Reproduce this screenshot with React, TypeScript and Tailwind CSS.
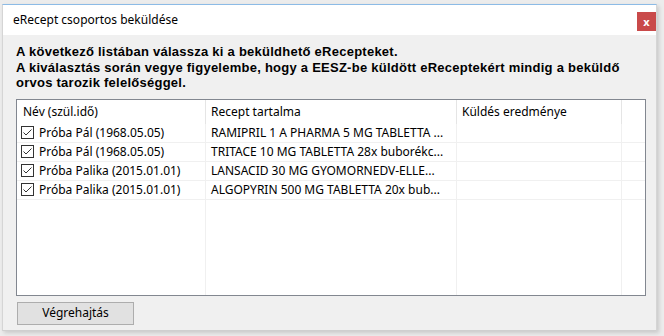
import React from "react";

const rows = [
  { name: "Próba Pál (1968.05.05)", recept: "RAMIPRIL 1 A PHARMA 5 MG TABLETTA ..." },
  { name: "Próba Pál (1968.05.05)", recept: "TRITACE 10 MG TABLETTA 28x buborékc..." },
  { name: "Próba Palika (2015.01.01)", recept: "LANSACID 30 MG GYOMORNEDV-ELLE..." },
  { name: "Próba Palika (2015.01.01)", recept: "ALGOPYRIN 500 MG TABLETTA 20x bub..." },
];

function CheckBox() {
  return (
    <span className="w-[13px] h-[13px] border border-[#333] bg-white flex items-center justify-center shrink-0">
      <svg width="11" height="11" viewBox="0 0 11 11">
        <path d="M1.5 5.5 L4 8 L9.5 2.5" fill="none" stroke="#333" strokeWidth="1" />
      </svg>
    </span>
  );
}

export default function App() {
  return (
    <div className="w-[664px] h-[336px] bg-[#ececec] overflow-hidden pt-[4px] pl-[2px]">
      {/* dialog window */}
      <div
        className="w-[655px] h-[327px] bg-[#f0f0f0] border-t border-[#8cbbe6] border-x border-b border-x-[#d5d5d5] border-b-[#cfcfcf] shadow-[2px_2px_4px_rgba(0,0,0,0.15)] flex flex-col"
        style={{ fontFamily: '"Noto Sans", sans-serif' }}
      >
        {/* title bar */}
        <div className="h-[30px] bg-white flex items-center justify-between pl-[10px]">
          <span className="text-[12px] text-black leading-none">eRecept csoportos beküldése</span>
          <div className="w-[19px] h-[19px] bg-[#c94a4a] flex items-center justify-center text-white text-[11px] font-bold leading-none mt-[2px]">
            x
          </div>
        </div>

        {/* message */}
        <div
          className="pl-[13px] pt-[9px] text-[13px] font-bold leading-[15.5px] tracking-[0.25px] text-black"
          style={{ fontFamily: '"Liberation Sans", Arial, sans-serif' }}
        >
          <p>A következő listában válassza ki a beküldhető eRecepteket.</p>
          <p>A kiválasztás során vegye figyelembe, hogy a EESZ-be küldött eReceptekért mindig a beküldő</p>
          <p>orvos tarozik felelőséggel.</p>
        </div>

        {/* list view */}
        <div className="ml-[13px] mt-[8px] w-[630px] h-[197px] bg-white border border-[#828790] overflow-hidden text-[12px] text-black">
          <div className="flex h-[24px] items-center">
            <div className="w-[189px] h-full pl-[6px] flex items-center border-r border-[#e5e5e5]">Név (szül.idő)</div>
            <div className="w-[251px] h-full pl-[5px] flex items-center border-r border-[#e5e5e5]">Recept tartalma</div>
            <div className="w-[165px] h-full pl-[5px] flex items-center border-r border-[#e5e5e5]">Küldés eredménye</div>
            <div className="flex-1 h-full" />
          </div>
          {rows.map((r, i) => (
            <div key={i} className="flex h-[19px] border-b border-[#f0f0f0]">
              <div className="w-[189px] h-full pl-[4px] flex items-center gap-[5px] border-r border-[#f0f0f0] whitespace-nowrap">
                <CheckBox />
                <span>{r.name}</span>
              </div>
              <div className="w-[251px] h-full pl-[5px] flex items-center border-r border-[#f0f0f0] whitespace-nowrap overflow-hidden">
                {r.recept}
              </div>
              <div className="w-[165px] h-full border-r border-[#f0f0f0]" />
              <div className="flex-1 h-full" />
            </div>
          ))}
          <div className="flex h-[200px]">
            <div className="w-[189px] h-full border-r border-[#f0f0f0]" />
            <div className="w-[251px] h-full border-r border-[#f0f0f0]" />
            <div className="w-[165px] h-full border-r border-[#f0f0f0]" />
          </div>
        </div>

        {/* action button */}
        <div className="ml-[14px] mt-[6px]">
          <button className="w-[117px] h-[23px] bg-[#e1e1e1] border border-[#adadad] text-[12px] text-black flex items-center justify-center">
            Végrehajtás
          </button>
        </div>
      </div>
    </div>
  );
}
